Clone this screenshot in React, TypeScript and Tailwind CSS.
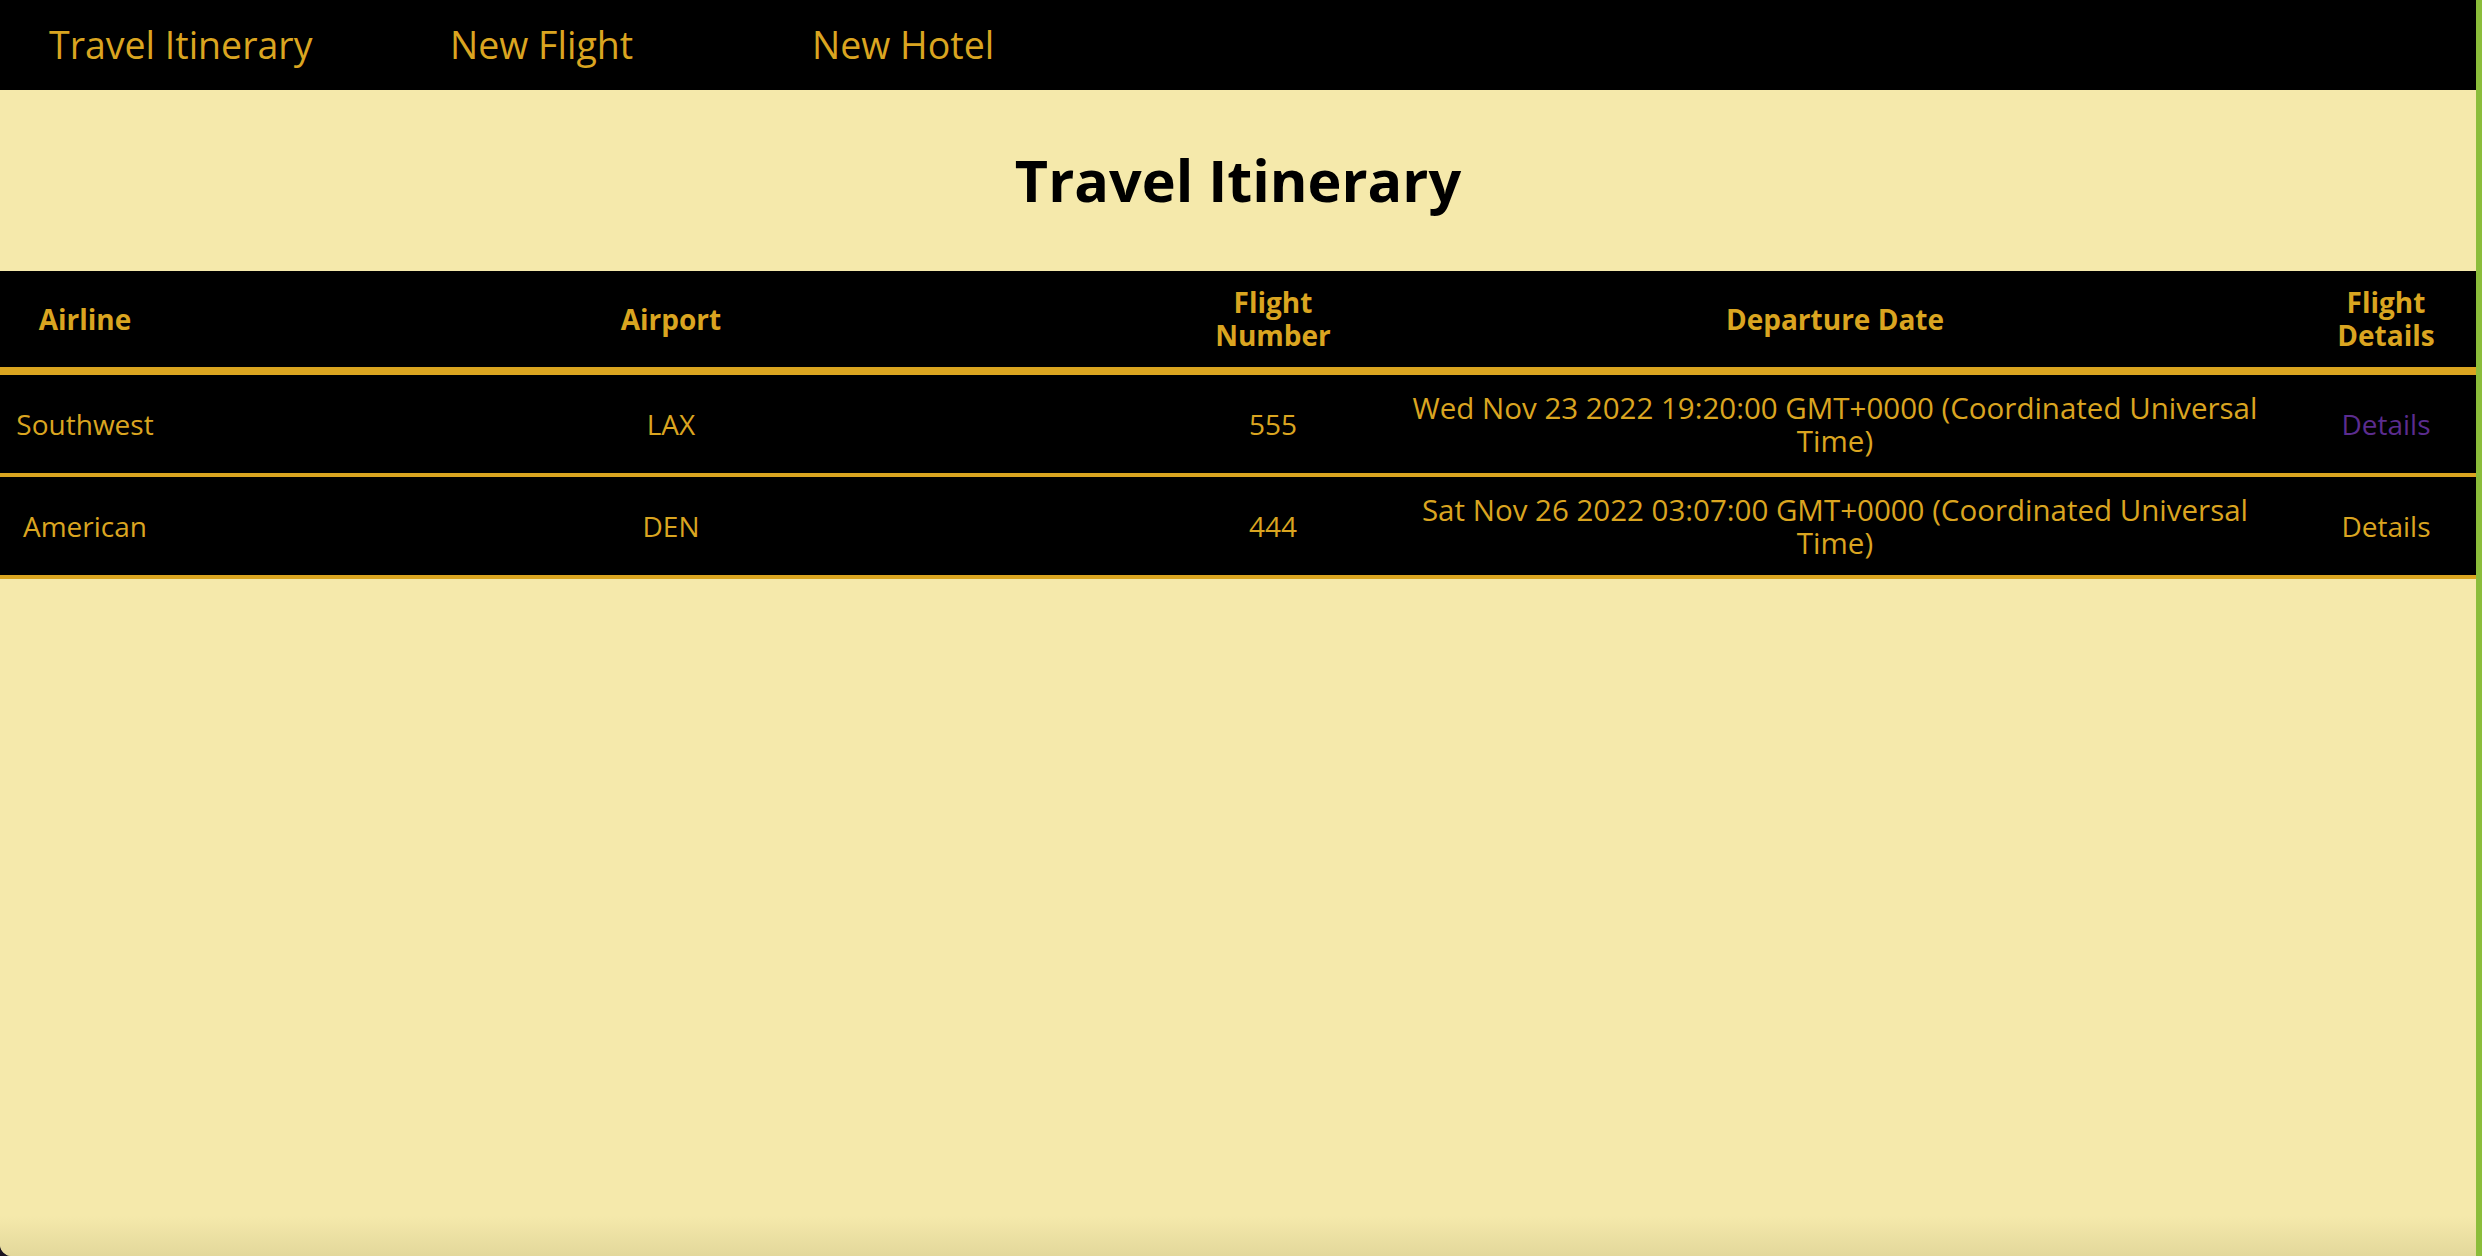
export default function App() {
  const flights = [
    { airline: "Southwest", airport: "LAX", number: "555", date: "Wed Nov 23 2022 19:20:00 GMT+0000 (Coordinated Universal", visited: true },
    { airline: "American", airport: "DEN", number: "444", date: "Sat Nov 26 2022 03:07:00 GMT+0000 (Coordinated Universal", visited: false },
  ];

  const cols = "grid grid-cols-[170px_1002px_202px_922px_1fr]";
  const cell = "flex items-center justify-center";

  return (
    <div className="flex h-screen w-full bg-[#1b1420] font-['Open_Sans',sans-serif]">
      <div className="flex w-[2476px] flex-col overflow-hidden rounded-bl-[12px] bg-[#F5E9AB]">
        {/* nav */}
        <nav className="flex h-[90px] shrink-0 items-center bg-black pl-[49px] text-[37.5px] text-[#DAA520]">
          <a className="w-[401px]">Travel Itinerary</a>
          <a className="w-[362px]">New Flight</a>
          <a>New Hotel</a>
        </nav>

        <div className="flex h-[181px] shrink-0 items-center justify-center">
          <h1 className="text-[57.5px] font-bold text-black">Travel Itinerary</h1>
        </div>

        {/* table */}
        <div className="text-[28px] leading-[33px] text-[#DAA520]">
          <div className={`${cols} h-[104px] border-b-8 border-[#DAA520] bg-black text-center font-bold`}>
            <div className={cell}>Airline</div>
            <div className={cell}>Airport</div>
            <div className={cell}>
              <span>Flight<br />Number</span>
            </div>
            <div className={cell}>Departure Date</div>
            <div className={cell}>
              <span>Flight<br />Details</span>
            </div>
          </div>
          {flights.map((f) => (
            <div key={f.number} className={`${cols} h-[102px] border-b-4 border-[#DAA520] bg-black text-center`}>
              <div className={cell}>{f.airline}</div>
              <div className={cell}>{f.airport}</div>
              <div className={cell}>{f.number}</div>
              <div className={`${cell} text-[29.5px]`}>
                <span>{f.date}<br />Time)</span>
              </div>
              <div className={`${cell} ${f.visited ? "text-[#5B2C8F]" : ""}`}>Details</div>
            </div>
          ))}
        </div>

        <div className="flex-1" />
        <div className="h-[40px] shrink-0 bg-gradient-to-b from-[#F5E9AB] to-[#E3D89B]" />
      </div>
      <div className="w-[6px] bg-[#8BBD3A]" />
    </div>
  );
}
